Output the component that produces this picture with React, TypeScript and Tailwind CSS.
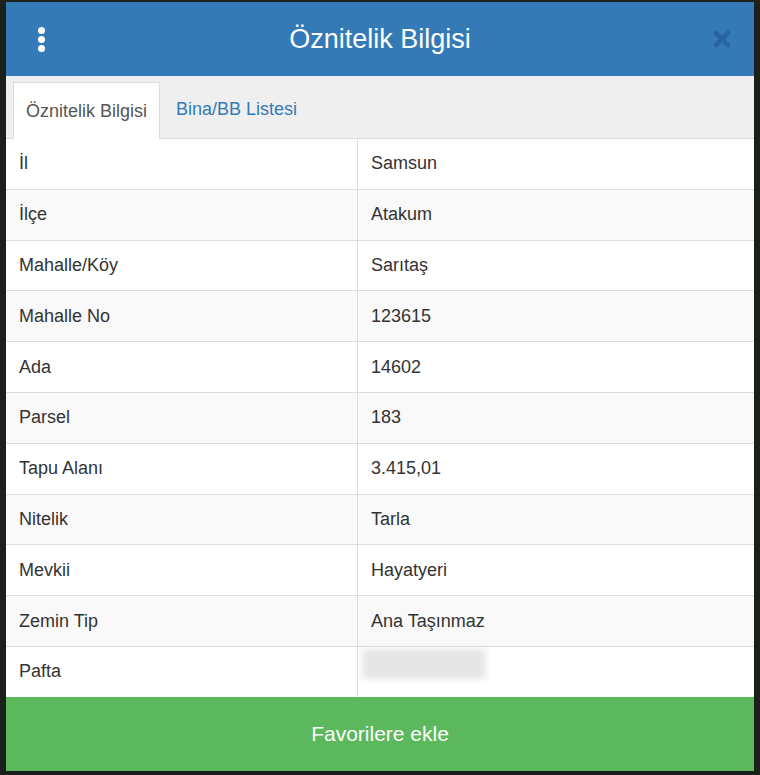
import { X } from 'lucide-react'

const rows: [string, string][] = [
  ['İl', 'Samsun'],
  ['İlçe', 'Atakum'],
  ['Mahalle/Köy', 'Sarıtaş'],
  ['Mahalle No', '123615'],
  ['Ada', '14602'],
  ['Parsel', '183'],
  ['Tapu Alanı', '3.415,01'],
  ['Nitelik', 'Tarla'],
  ['Mevkii', 'Hayatyeri'],
  ['Zemin Tip', 'Ana Taşınmaz'],
]

export default function App() {
  return (
    <div className="w-[760px] h-[775px] bg-[#1d211c] pt-[2px] pl-[6px] font-['Liberation_Sans',Arial,sans-serif]">
      <div className="w-[748px] flex flex-col bg-white shadow-lg">
        {/* header */}
        <div className="h-[74px] bg-[#337ab7] flex items-center pl-[23px] pr-[20px]">
          <div className="flex flex-col gap-[2px] w-6 items-center">
            <span className="w-[7px] h-[7px] rounded-full bg-white" />
            <span className="w-[7px] h-[7px] rounded-full bg-white" />
            <span className="w-[7px] h-[7px] rounded-full bg-white" />
          </div>
          <h1 className="flex-1 text-center text-white text-[27px] leading-none pr-[3px]">Öznitelik Bilgisi</h1>
          <X className="w-[24px] h-[24px] text-[#2865a0]" strokeWidth={4.5} />
        </div>

        {/* tabs */}
        <div className="h-[63px] bg-[#efefef] border-b border-[#dddddd] flex items-end pl-[7px]">
          <div className="h-[57px] px-[12px] bg-white border border-b-0 border-[#dddddd] flex items-center text-[18px] text-[#555555] -mb-px">
            Öznitelik Bilgisi
          </div>
          <div className="h-[57px] px-[16px] flex items-center text-[18px] text-[#337ab7]">Bina/BB Listesi</div>
        </div>

        {/* table */}
        <div className="flex flex-col text-[18px] text-[#333333]">
          {rows.map(([k, v], i) => (
            <div
              key={k}
              className={`h-[50.8px] flex border-b border-[#dddddd] ${i % 2 === 1 ? 'bg-[#f9f9f9]' : 'bg-white'}`}
            >
              <div className="w-[352px] flex items-center pl-[13px] border-r border-[#dddddd]">{k}</div>
              <div className="flex-1 flex items-center pl-[13px]">{v}</div>
            </div>
          ))}
          <div className="h-[50px] flex bg-white">
            <div className="w-[352px] flex items-center pl-[13px] border-r border-[#dddddd]">Pafta</div>
            <div className="flex-1 flex items-start pl-[4px] pt-[2px]">
              <div className="w-[124px] h-[30px] bg-[#e6e6e6] blur-[3px]" />
            </div>
          </div>
        </div>

        {/* action */}
        <button className="h-[74px] bg-[#5cb85c] text-white text-[21px] flex items-center justify-center">
          Favorilere ekle
        </button>
      </div>
    </div>
  )
}
